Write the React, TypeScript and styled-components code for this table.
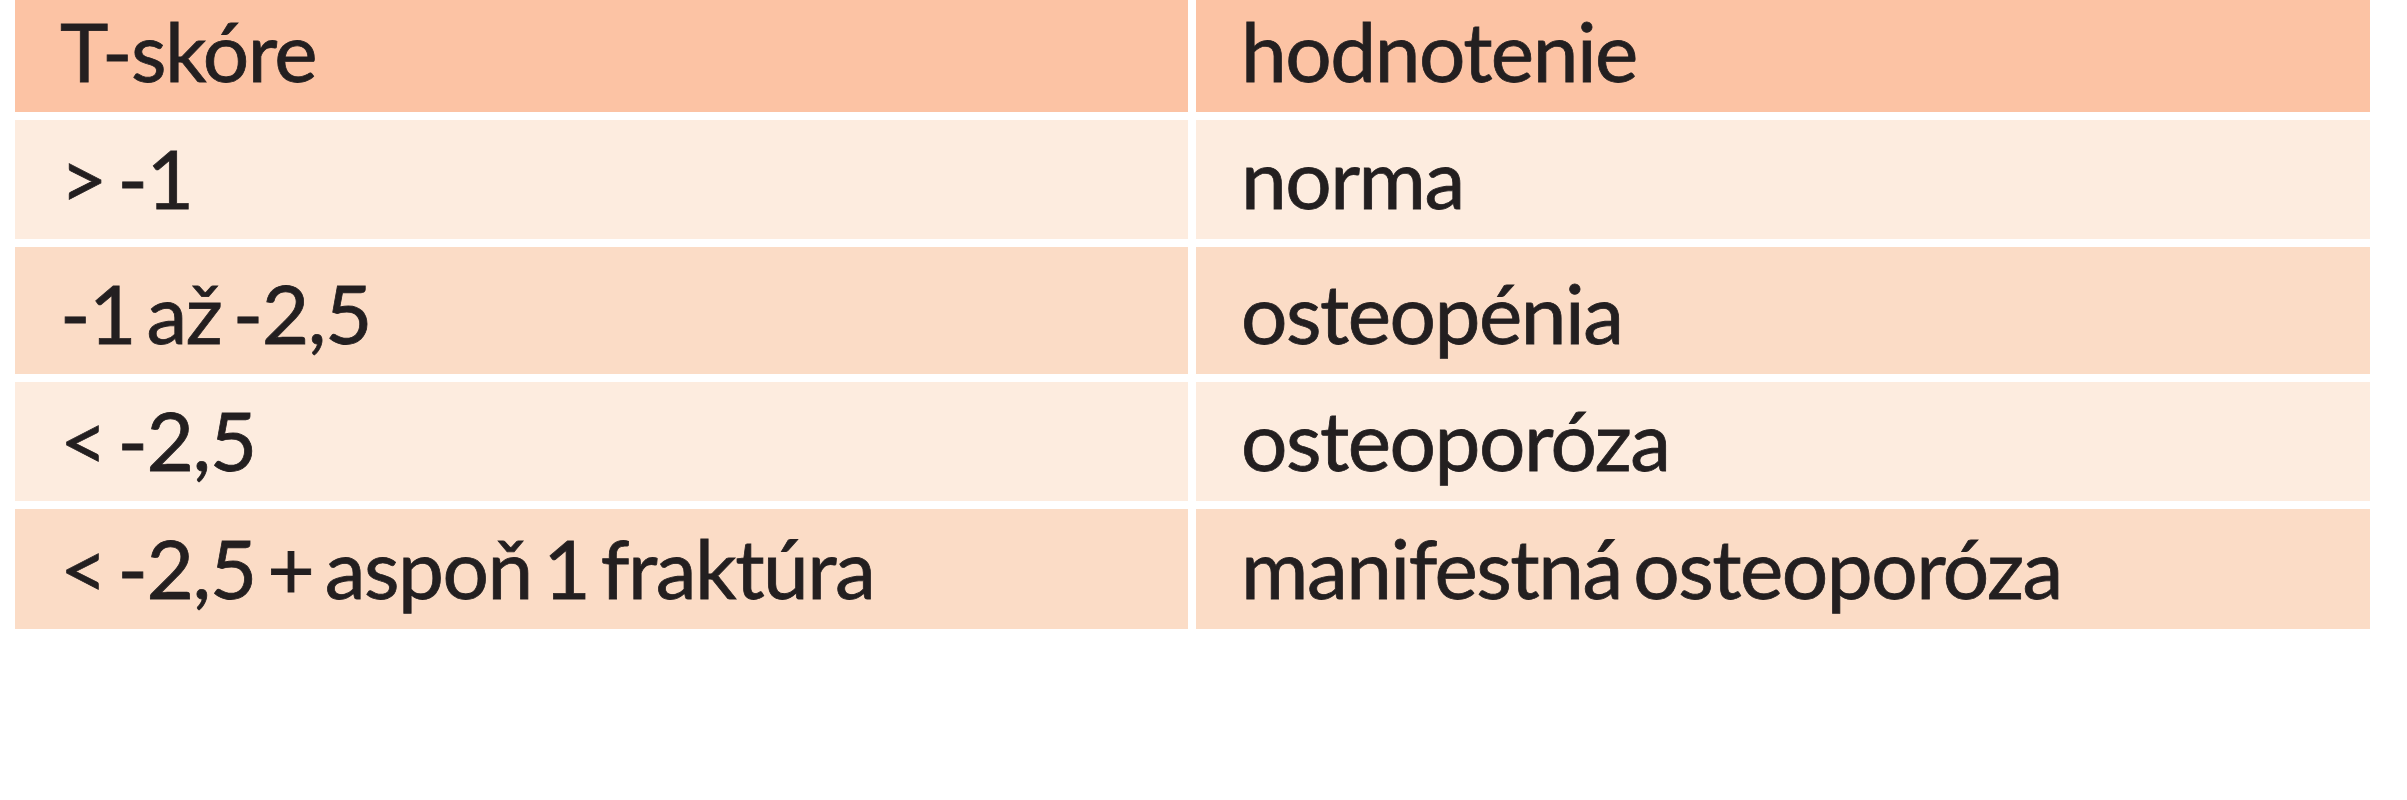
import styled, { createGlobalStyle } from 'styled-components';

type Tone = 'head' | 'light' | 'mid';

const Palette = {
  Head: '#fcc3a4',
  Light: '#fdecdf',
  Mid: '#fbdcc6',
  Text: '#231f20',
  White: '#ffffff',
};

const rows: { score: string; label: string; tone: Tone; height: number }[] = [
  { score: 'T-skóre', label: 'hodnotenie', tone: 'head', height: 112 },
  { score: '> -1', label: 'norma', tone: 'light', height: 119 },
  { score: '-1 až -2,5', label: 'osteopénia', tone: 'mid', height: 127 },
  { score: '< -2,5', label: 'osteoporóza', tone: 'light', height: 119 },
  {
    score: '< -2,5 + aspoň 1 fraktúra',
    label: 'manifestná osteoporóza',
    tone: 'mid',
    height: 120,
  },
];

const App = () => {
  return (
    <>
      <GlobalStyle />
      <Page>
        <Table $rows={rows.map((r) => `${r.height}px`).join(' ')}>
          {rows.map((row) => (
            <Row key={row.score}>
              <Cell $tone={row.tone}>{row.score}</Cell>
              <Cell $tone={row.tone}>{row.label}</Cell>
            </Row>
          ))}
        </Table>
      </Page>
    </>
  );
};

export default App;

const GlobalStyle = createGlobalStyle`
  html, body {
    margin: 0;
    padding: 0;
    background: ${Palette.White};
  }
`;

const Page = styled.div`
  width: 2407px;
  height: 800px;
  padding-left: 15px;
  box-sizing: border-box;
  background: ${Palette.White};
`;

const Table = styled.div<{ $rows: string }>`
  display: grid;
  width: 2355px;
  grid-template-columns: 1173px 1174px;
  grid-template-rows: ${({ $rows }) => $rows};
  column-gap: 8px;
  row-gap: 8px;
`;

const Row = styled.div`
  display: contents;
`;

const Cell = styled.div<{ $tone: Tone }>`
  display: flex;
  align-items: flex-end;
  padding: 0 0 13px 45px;
  box-sizing: border-box;

  background: ${({ $tone }) =>
    $tone === 'head' ? Palette.Head : $tone === 'mid' ? Palette.Mid : Palette.Light};
  color: ${Palette.Text};

  font-family: Lato, 'Open Sans', 'Liberation Sans', sans-serif;
  font-size: 82px;
  line-height: normal;
  letter-spacing: -1.5px;
  word-spacing: -8px;
  -webkit-text-stroke: 0.8px ${Palette.Text};
  white-space: nowrap;
`;
